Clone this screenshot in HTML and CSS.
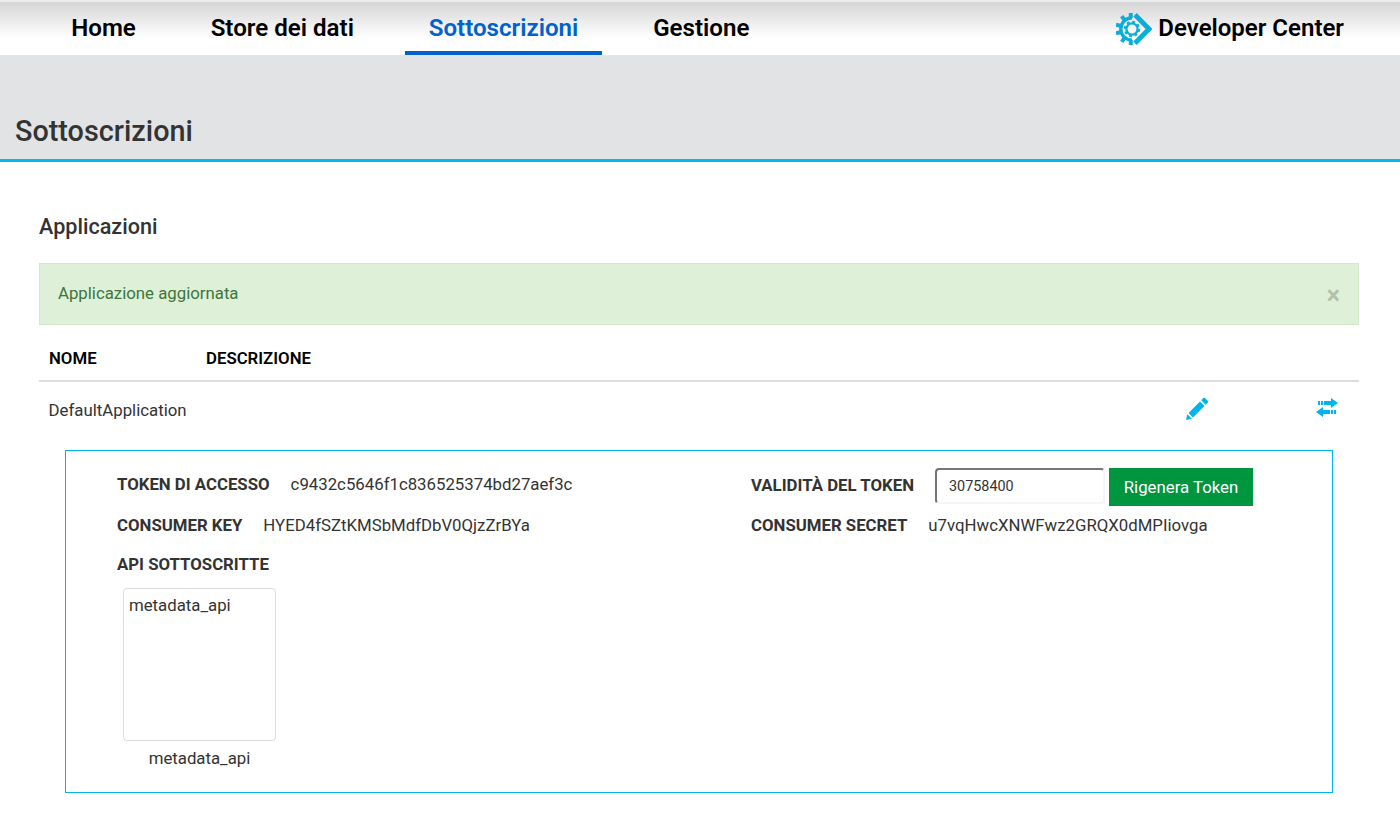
FILE: index.html
```html
<!DOCTYPE html>
<html lang="it">
<head>
<meta charset="utf-8">
<title>Sottoscrizioni</title>
<link rel="stylesheet" href="styles.css">
</head>
<body>
<header class="topbar">
  <nav class="nav">
    <a class="nav-link">Home</a>
    <a class="nav-link">Store dei dati</a>
    <a class="nav-link active">Sottoscrizioni</a>
    <a class="nav-link">Gestione</a>
  </nav>
  <div class="brand">
    <svg class="brand-icon" width="36" height="32" viewBox="0 0 36 32" fill="none" stroke="#0aaed8">
      <path d="M16 4.8A11.2 11.2 0 0 0 16 27.2" stroke-width="3.4"/>
      <path d="M14.8 5V0M8.6 7.2L5.7 3.2M5.2 13L0 11.8M5.2 19L0 20.2M8.6 24.8L5.7 28.8M14.8 27V32" stroke-width="4"/>
      <circle cx="16" cy="16" r="5.6" stroke-width="2.3"/>
      <circle cx="16" cy="16" r="7.2" stroke-width="2" stroke-dasharray="2.83 2.83"/>
      <path d="M19 1.8L33 16L19 30.2" stroke-width="4.8"/>
    </svg>
    <span>Developer Center</span>
  </div>
</header>
<div class="banner"><h1>Sottoscrizioni</h1></div>
<main class="content">
  <h2>Applicazioni</h2>
  <div class="alert"><span>Applicazione aggiornata</span><span class="close">×</span></div>
  <div class="row head"><span class="name">NOME</span><span>DESCRIZIONE</span></div>
  <div class="row app">
    <span class="app-name">DefaultApplication</span>
    <svg class="edit" width="24" height="24" viewBox="0 0 24 24" fill="#00b5ef">
      <path d="M1 23L2.3 17.2L6.8 21.7ZM3.5 16L15 4.5L19.5 9L8 20.5ZM16.2 3.3L18.4 1.1Q19.2.5 20 1.1L22.9 4Q23.5 4.8 22.9 5.6L20.7 7.8Z"/>
    </svg>
    <svg class="swap" width="22" height="20" viewBox="0 0 22 20" fill="#00b5ef">
      <path d="M2 3h2v4H2zM5 3h2v4H5zM8 3h7V0l7 5l-7 5V7H8zM14 12v4H7v3l-7-5l7-5v3zM15 12h2v4h-2zM18 12h2v4h-2z"/>
    </svg>
  </div>
  <section class="details">
    <div class="column">
      <div class="field token"><b>TOKEN DI ACCESSO</b><span>c9432c5646f1c836525374bd27aef3c</span></div>
      <div class="field"><b>CONSUMER KEY</b><span>HYED4fSZtKMSbMdfDbV0QjzZrBYa</span></div>
      <div class="field apis"><b>API SOTTOSCRITTE</b></div>
      <div class="api">
        <div class="thumb">metadata_api</div>
        <div class="caption">metadata_api</div>
      </div>
    </div>
    <div class="column">
      <div class="field token validity"><b>VALIDITÀ DEL TOKEN</b><input class="duration" value="30758400"><button class="renew">Rigenera Token</button></div>
      <div class="field"><b>CONSUMER SECRET</b><span>u7vqHwcXNWFwz2GRQX0dMPIiovga</span></div>
    </div>
  </section>
</main>
</body>
</html>
```
FILE: styles.css
```css
* { box-sizing: border-box; }
body { margin: 0; height: 820px; overflow: hidden; background: #fff; color: #333; font: 16.8px/24px Roboto, sans-serif; }
.topbar { height: 55px; border-top: 2px solid #e9eeed; background: linear-gradient(#d5d5d5, #fff 36px); display: flex; justify-content: space-between; padding: 0 56px 0 47.2px; color: #000; font-size: 24px; font-weight: 600; }
.nav { display: flex; gap: 26.8px; font-size: 24.12px; }
.nav-link { height: 53px; padding: 0 24px; line-height: 52px; border-bottom: 4px solid transparent; white-space: nowrap; }
.active { color: #0061cf; border-bottom-color: #0061cf; }
.brand { display: flex; gap: 6px; line-height: 52px; white-space: nowrap; }
.brand-icon { margin-top: 11px; }
.banner { height: 107px; padding: 59px 15px 0; background: #e2e3e5; border-bottom: 3px solid #00b9ef; }
h1 { margin: 0; font-size: 28.8px; line-height: 34px; font-weight: 500; }
.content { padding: 51px 41px 0 39px; }
h2 { margin: 0; font-size: 21.6px; line-height: 28px; font-weight: 500; }
.alert { display: flex; justify-content: space-between; height: 62px; margin-top: 22px; padding: 17px 18px 0 18px; background: #dff0d8; border: 1px solid #d0e9c6; color: #3c763d; }
.close { color: #b2c0ad; font-size: 25px; font-weight: 700; line-height: 29px; }
.row { display: flex; }
.head { height: 57px; padding: 21px 10px 0; border-bottom: 2px solid #ddd; color: #000; font-weight: 600; }
.name { width: 157px; }
.app { height: 68px; padding: 16px 21px 0 9.6px; }
.app-name { flex: 1; }
.edit { margin: -1px 107px 0 0; }
.details { display: grid; grid-template-columns: 634px 1fr; width: 1268px; height: 343px; margin-left: 26px; padding: 17px 0 0 51px; border: 1px solid #00b5ef; }
.field { display: flex; gap: 21px; height: 39px; line-height: 38px; white-space: nowrap; }
.field b { font-weight: 700; }
.token { height: 38px; line-height: 32px; }
.validity b { line-height: 34px; }
.duration { width: 170px; height: 36px; padding: 0 12px; border: 2px solid; border-color: #767676 #f5f5f5 #f5f5f5 #767676; border-radius: 4px; color: #333; font: 14.4px Roboto, sans-serif; }
.renew { width: 144px; height: 38px; margin-left: -17px; padding: 0 0 1px; border: 0; background: #009640; color: #fff; font: 16.8px Roboto, sans-serif; }
.api { width: 153px; margin: 4px 0 0 6px; }
.thumb { height: 153px; padding: 4px 5px; border: 1px solid #ddd; border-radius: 4px; }
.caption { margin-top: 5px; text-align: center; }
```
